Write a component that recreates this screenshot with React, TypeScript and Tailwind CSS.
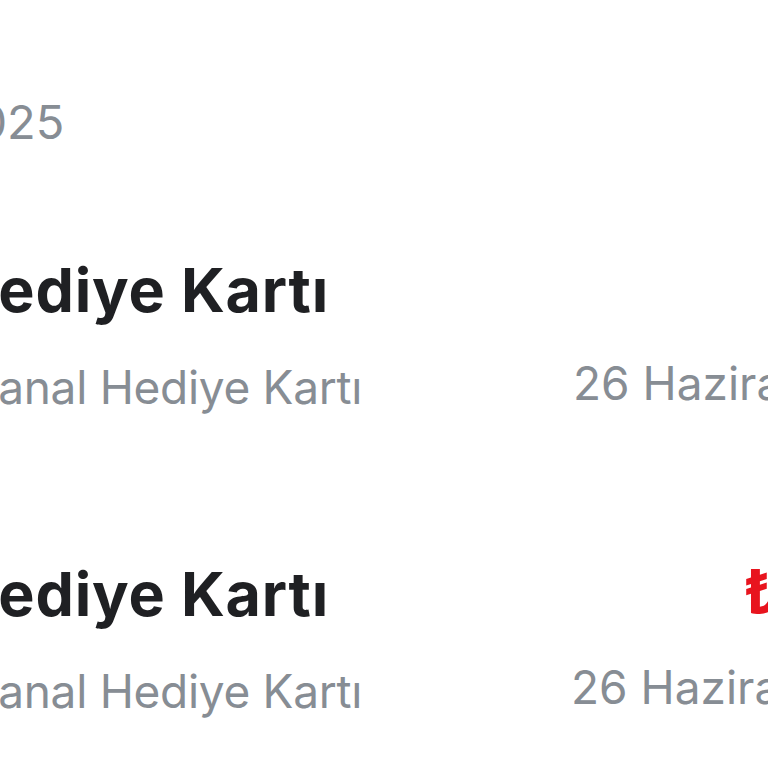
import React from "react";

type Tx = {
  title: string;
  subtitle: string;
  date: string;
  amount: string;
  amountClass: string;
  amountPad: string;
};

const items: Tx[] = [
  {
    title: "Hediye Kartı",
    subtitle: "Sanal Hediye Kartı",
    date: "26 Haziran 2025",
    amount: "₺50,00",
    amountClass: "text-[#16a34a]",
    amountPad: "pl-[260px]",
  },
  {
    title: "Hediye Kartı",
    subtitle: "Sanal Hediye Kartı",
    date: "26 Haziran 2025",
    amount: "₺50,00",
    amountClass: "text-[#e8141e]",
    amountPad: "pl-[172px]",
  },
];

const Row: React.FC<{ tx: Tx; first?: boolean }> = ({ tx, first }) => (
  <div className={`flex ${first ? "mt-[115px]" : "mt-[154px]"}`}>
    {/* left: title + subtitle */}
    <div className="w-[573px] shrink-0 flex flex-col gap-[43px] whitespace-nowrap">
      <div className="-ml-[48px] text-[61px] leading-none font-bold tracking-[0.8px] text-[#1f2023]">
        {tx.title}
      </div>
      <div className="-ml-[31px] text-[46px] leading-none tracking-[-0.3px] text-[#878d94]">
        {tx.subtitle}
      </div>
    </div>
    {/* right: amount + date */}
    <div className={`flex flex-col gap-[43px] -mt-[3px] whitespace-nowrap ${first ? "" : "-ml-[2px]"}`}>
      <div className={`${tx.amountPad} text-[60px] leading-none font-bold ${tx.amountClass}`}>
        {tx.amount}
      </div>
      <div className="text-[46px] leading-none text-[#878d94]">{tx.date}</div>
    </div>
  </div>
);

export default function App() {
  return (
    <div className="w-[768px] h-[768px] overflow-hidden bg-white font-['Inter',sans-serif]">
      <div className="pt-[98px]">
        <div className="-ml-[235px] text-[47px] leading-none text-[#878d94] whitespace-nowrap">
          Haziran 2025
        </div>
        {items.map((tx, i) => (
          <Row key={i} tx={tx} first={i === 0} />
        ))}
      </div>
    </div>
  );
}
